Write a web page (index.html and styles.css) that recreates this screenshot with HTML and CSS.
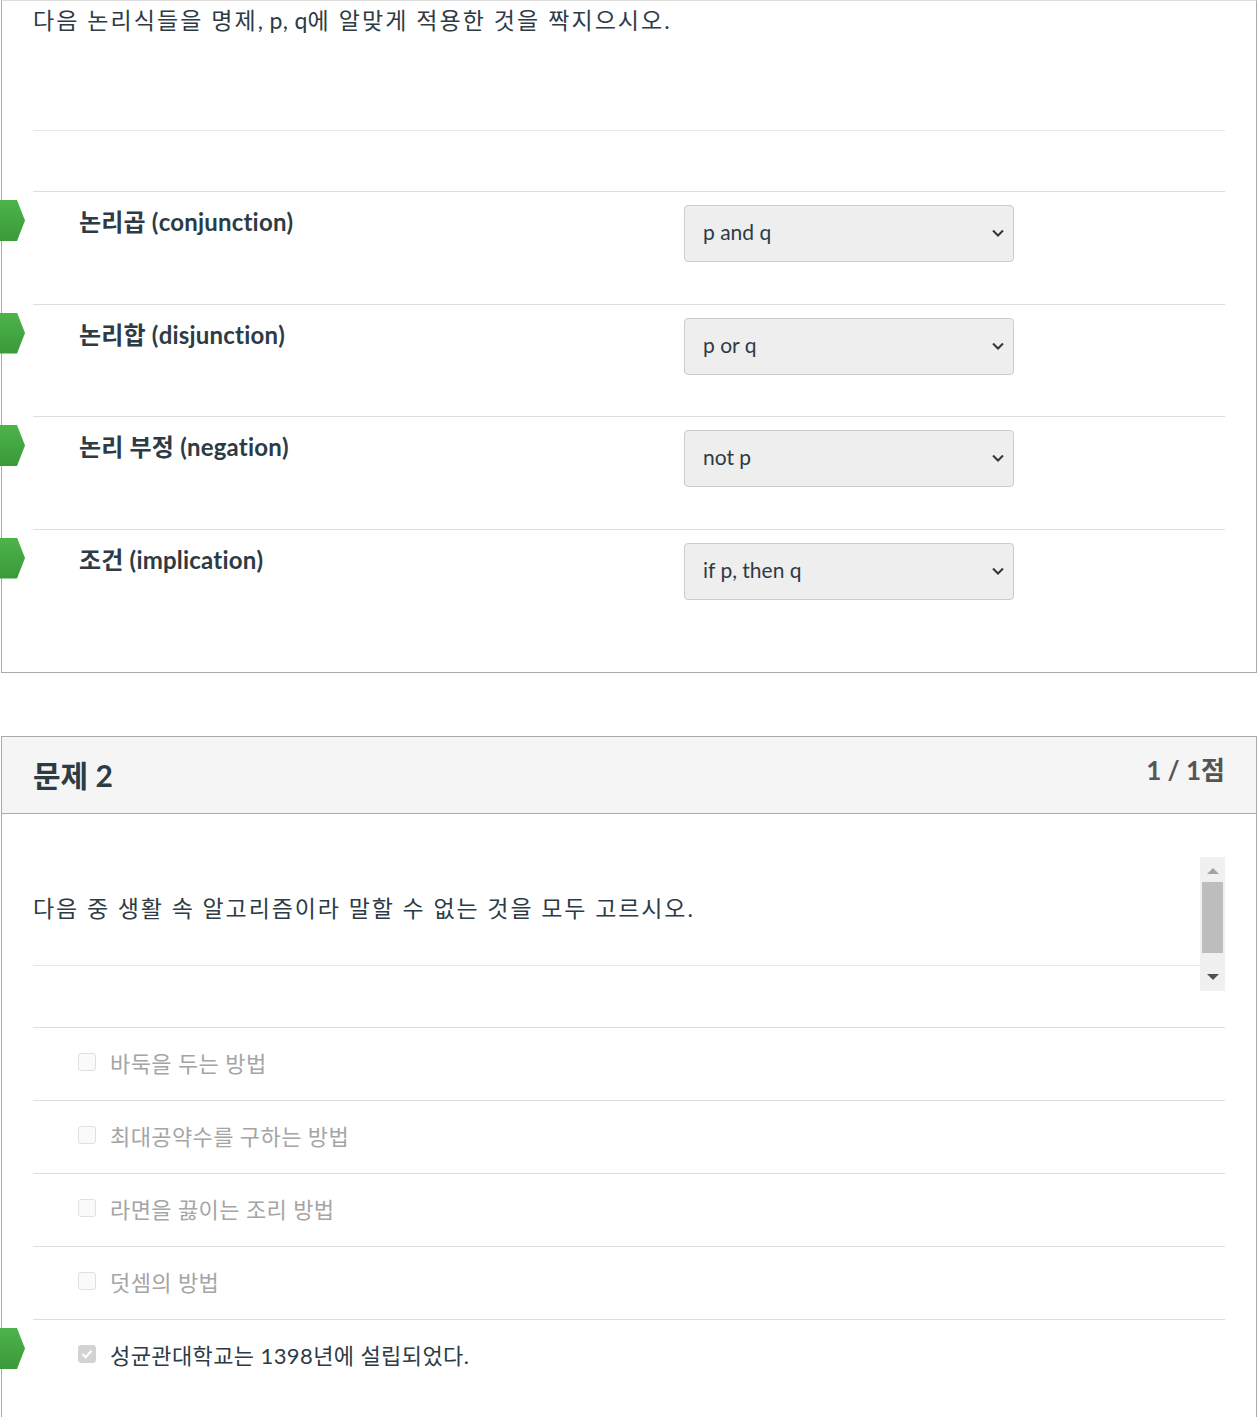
FILE: index.html
```html
<!DOCTYPE html>
<html lang="ko">
<head>
<meta charset="utf-8">
<link rel="stylesheet" href="styles.css">
</head>
<body>
<div class="page">
  <div class="question q1">
    <div class="q-body">
      <div class="q-text">다음 논리식들을 명제<span class="latin">, p, q</span>에 알맞게 적용한 것을 짝지으시오.</div>
      <div class="answers">
        <div class="match-row">
          <span class="marker"></span>
          <div class="match-label">논리곱 (conjunction)</div>
          <div class="select-wrap">
            <select class="match-select"><option>p and q</option></select>
            <svg class="chev" width="14" height="10" viewBox="0 0 14 10"><path d="M2 2.5 L7 7.5 L12 2.5" fill="none" stroke="#333" stroke-width="2"/></svg>
          </div>
        </div>
        <div class="match-row">
          <span class="marker"></span>
          <div class="match-label">논리합 (disjunction)</div>
          <div class="select-wrap">
            <select class="match-select"><option>p or q</option></select>
            <svg class="chev" width="14" height="10" viewBox="0 0 14 10"><path d="M2 2.5 L7 7.5 L12 2.5" fill="none" stroke="#333" stroke-width="2"/></svg>
          </div>
        </div>
        <div class="match-row">
          <span class="marker"></span>
          <div class="match-label">논리 부정 (negation)</div>
          <div class="select-wrap">
            <select class="match-select"><option>not p</option></select>
            <svg class="chev" width="14" height="10" viewBox="0 0 14 10"><path d="M2 2.5 L7 7.5 L12 2.5" fill="none" stroke="#333" stroke-width="2"/></svg>
          </div>
        </div>
        <div class="match-row">
          <span class="marker"></span>
          <div class="match-label">조건 (implication)</div>
          <div class="select-wrap">
            <select class="match-select"><option>if p, then q</option></select>
            <svg class="chev" width="14" height="10" viewBox="0 0 14 10"><path d="M2 2.5 L7 7.5 L12 2.5" fill="none" stroke="#333" stroke-width="2"/></svg>
          </div>
        </div>
      </div>
    </div>
  </div>

  <div class="question q2">
    <div class="q-header">
      <h2 class="q-title">문제 2</h2>
      <div class="q-score">1 / 1점</div>
    </div>
    <div class="q-body">
      <div class="q-frame">
        <div class="q-frame-content">
          <div class="q-text2">다음 중 생활 속 알고리즘이라 말할 수 없는 것을 모두 고르시오.</div>
        </div>
        <div class="scrollbar">
          <div class="sb-up"></div>
          <div class="sb-thumb"></div>
          <div class="sb-down"></div>
        </div>
      </div>
      <div class="answers answers2">
        <div class="check-row">
          <span class="checkbox"></span>
          <span class="check-text">바둑을 두는 방법</span>
        </div>
        <div class="check-row">
          <span class="checkbox"></span>
          <span class="check-text">최대공약수를 구하는 방법</span>
        </div>
        <div class="check-row">
          <span class="checkbox"></span>
          <span class="check-text">라면을 끓이는 조리 방법</span>
        </div>
        <div class="check-row">
          <span class="checkbox"></span>
          <span class="check-text">덧셈의 방법</span>
        </div>
        <div class="check-row selected">
          <span class="marker"></span>
          <span class="checkbox checked"><svg width="14" height="14" viewBox="0 0 14 14"><path d="M2.5 7.2 L5.6 10.2 L11.5 3.8" fill="none" stroke="#fff" stroke-width="2"/></svg></span>
          <span class="check-text">성균관대학교는 1398년에 설립되었다.</span>
        </div>
      </div>
    </div>
  </div>
</div>
</body>
</html>
```

FILE: styles.css
```css
* { box-sizing: border-box; }
html, body { margin: 0; padding: 0; background: #fff; }
body {
  font-family: "Lato", "Noto Sans CJK KR", sans-serif;
  color: #2d3b45;
  width: 1258px;
  height: 1417px;
  overflow: hidden;
}
.page { padding-left: 1px; }

.question {
  width: 1256px;
  border: 1px solid #aaa;
  position: relative;
}
.q1 { border-top: 1px solid #ddd; }
.q2 { margin-top: 63px; border-bottom: none; min-height: 700px; }

.q-body { padding: 0 31px 0 31px; }
.q1 .q-body { padding-bottom: 31px; }

.q-text {
  font-size: 23px;
  letter-spacing: 2.05px;
  line-height: 34px;
  padding-top: 2px;
  height: 130px;
  border-bottom: 1px solid #e6e6e6;
}
.latin { letter-spacing: 0.3px; }

.answers { margin-top: 60px; }

.match-row {
  position: relative;
  height: 112.5px;
  border-top: 1px solid #ddd;
  padding: 13px 0 0 46px;
  display: flex;
  align-items: flex-start;
}
.match-label {
  width: 605px;
  font-size: 24px;
  letter-spacing: 0.2px;
  line-height: 33px;
  font-weight: 700;
}
.select-wrap {
  position: relative;
  width: 330px;
  height: 57px;
}
.match-select {
  -webkit-appearance: none;
  appearance: none;
  width: 330px;
  height: 57px;
  font-family: "Lato", "Noto Sans CJK KR", sans-serif;
  font-size: 21px;
  color: #2d3b45;
  background-color: #eee;
  border: 1px solid #c7cdd1;
  border-radius: 4px;
  padding: 0 0 4px 18px;
}
.chev {
  position: absolute;
  right: 9px;
  top: 23px;
  pointer-events: none;
}

.marker {
  position: absolute;
  left: -33px;
  top: 8px;
  width: 25px;
  height: 41px;
  background: linear-gradient(#4db34a, #3a9a3a);
  clip-path: polygon(0 0, 17px 0, 25px 50%, 17px 100%, 0 100%);
}

.q-header {
  height: 77px;
  background: #f5f5f5;
  border-bottom: 1px solid #aaa;
  display: flex;
  justify-content: space-between;
  align-items: center;
  padding: 0 31px 0 31px;
}
.q-title {
  margin: 0 0 2px 0;
  font-size: 30px;
  font-weight: 700;
}
.q-score {
  font-size: 26px;
  font-weight: 700;
  color: #555;
  margin-bottom: 14px;
}

.q-frame {
  margin-top: 43px;
  height: 134px;
  display: flex;
}
.q-frame-content { flex: 1; }
.q-text2 {
  font-size: 23px;
  letter-spacing: 1.9px;
  line-height: 34px;
  padding-top: 34px;
  height: 109px;
  border-bottom: 1px solid #e6e6e6;
}
.scrollbar {
  width: 25px;
  height: 134px;
  background: #f0f0f0;
  position: relative;
  display: flex;
  flex-direction: column;
  align-items: center;
}
.sb-up {
  margin-top: 11px;
  width: 0; height: 0;
  border-left: 6px solid transparent;
  border-right: 6px solid transparent;
  border-bottom: 6px solid #a3a3a3;
}
.sb-thumb {
  margin-top: 8px;
  width: 21px;
  height: 71px;
  background: #bdbdbd;
}
.sb-down {
  margin-top: 21px;
  width: 0; height: 0;
  border-left: 6px solid transparent;
  border-right: 6px solid transparent;
  border-top: 6px solid #505050;
}

.answers2 { margin-top: 36px; }
.check-row {
  position: relative;
  height: 73px;
  border-top: 1px solid #ddd;
  padding: 0 0 4px 45px;
  display: flex;
  align-items: center;
}
.check-row .marker { top: 8px; }
.checkbox {
  width: 18px;
  height: 18px;
  border: 1px solid #e0e0e0;
  border-radius: 3px;
  background: #fafafa;
  margin-right: 14px;
  display: flex;
  align-items: center;
  justify-content: center;
}
.checkbox.checked { background: #d3d3d3; border-color: #d3d3d3; }
.check-text {
  font-size: 22px;
  letter-spacing: 0.4px;
  color: #a5a5a5;
}
.selected .check-text { color: #2d3b45; }
```
